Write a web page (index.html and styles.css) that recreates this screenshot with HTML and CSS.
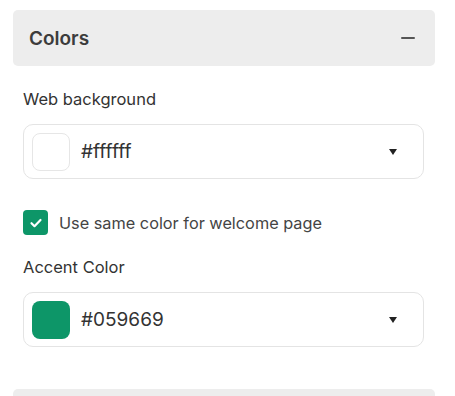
FILE: index.html
```html
<!DOCTYPE html>
<html lang="en">
<head>
    <meta charset="UTF-8">
    <meta name="viewport" content="width=device-width, initial-scale=1.0">
    <title>Colors</title>
    <link rel="stylesheet" href="styles.css">
</head>
<body>
    <div class="section">
        <div class="section-header">
            <h2 class="section-title">Colors</h2>
            <span class="collapse"></span>
        </div>
        <div class="section-body">
            <div class="field">
                <label class="field-label">Web background</label>
                <div class="color-select">
                    <span class="swatch swatch-white"></span>
                    <span class="color-value">#ffffff</span>
                    <span class="caret"></span>
                </div>
            </div>
            <label class="check-row">
                <span class="checkbox">
                    <svg width="14" height="14" viewBox="0 0 14 14"><path d="M2.5 7.2l3 3 6-6.2" fill="none" stroke="#fff" stroke-width="2.2" stroke-linecap="round" stroke-linejoin="round"/></svg>
                </span>
                <span class="check-text">Use same color for welcome page</span>
            </label>
            <div class="field field-accent">
                <label class="field-label">Accent Color</label>
                <div class="color-select">
                    <span class="swatch swatch-green"></span>
                    <span class="color-value">#059669</span>
                    <span class="caret"></span>
                </div>
            </div>
        </div>
    </div>
    <div class="section section-next">
        <div class="section-header"></div>
    </div>
</body>
</html>
```
FILE: styles.css
```css
body {
    margin: 0;
    padding: 10px 20px 0 13px;
    background-color: #fff;
    color: #333;
    font-family: 'Inter', 'Liberation Sans', sans-serif;
}
.section-header {
    height: 56px;
    background-color: #ededed;
    border-radius: 5px;
    padding: 0 20px 0 16px;
    display: flex;
    align-items: center;
    justify-content: space-between;
}
.section-title {
    margin: 0;
    font-size: 19px;
    font-weight: 600;
    color: #3c3c3c;
}
.collapse {
    width: 14px;
    height: 2px;
    background-color: #555;
    border-radius: 1px;
}
.section-body {
    padding: 0 11px 0 10px;
}
.field {
    margin-top: 23px;
}
.field-label {
    display: block;
    font-size: 16.5px;
    line-height: 20px;
    color: #333;
    margin-bottom: 15px;
}
.color-select {
    height: 55px;
    box-sizing: border-box;
    border: 1px solid #e4e4e4;
    border-radius: 10px;
    display: flex;
    align-items: center;
    padding: 0 26px 0 8px;
}
.swatch {
    width: 38px;
    height: 38px;
    box-sizing: border-box;
    border-radius: 8px;
    margin-right: 11px;
}
.swatch-white {
    border: 1px solid #e6e6e6;
    background-color: #fff;
}
.swatch-green {
    background-color: #0d9668;
}
.color-value {
    flex: 1;
    font-size: 19px;
    color: #333;
}
.caret {
    width: 0;
    height: 0;
    border-left: 4.5px solid transparent;
    border-right: 4.5px solid transparent;
    border-top: 6px solid #222;
}
.check-row {
    display: flex;
    align-items: center;
    margin-top: 31px;
}
.checkbox {
    width: 25px;
    height: 25px;
    border-radius: 4px;
    background-color: #0d9668;
    display: flex;
    align-items: center;
    justify-content: center;
    margin-right: 11px;
}
.check-text {
    font-size: 16.3px;
    color: #444;
}
.field-accent {
    margin-top: 22px;
}
.section-next {
    margin-top: 42px;
}
```
